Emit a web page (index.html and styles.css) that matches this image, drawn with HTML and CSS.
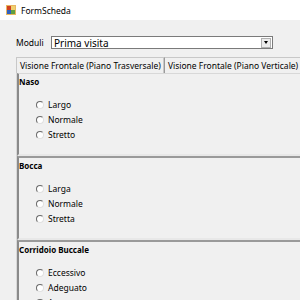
FILE: index.html
```html
<!DOCTYPE html>
<html lang="it">
<head>
<meta charset="UTF-8">
<title>FormScheda</title>
<link rel="stylesheet" href="styles.css">
</head>
<body>

<div class="titlebar">
    <svg class="app-icon" width="10" height="10" viewBox="0 0 10 10">
        <rect x="0" y="0" width="10" height="10" fill="#e8b860"/>
        <rect x="1" y="1" width="4" height="4" fill="#d04020"/>
        <rect x="5" y="1" width="4" height="4" fill="#f0d070"/>
        <rect x="1" y="5" width="4" height="4" fill="#3060c0"/>
        <rect x="5" y="5" width="4" height="4" fill="#60a040"/>
    </svg>
    <span class="title">FormScheda</span>
</div>

<div class="form">
    <div class="field-row">
        <label class="field-label">Moduli</label>
        <div class="combo">
            <span class="combo-text">Prima visita</span>
            <span class="combo-btn"><span class="arrow"></span></span>
        </div>
    </div>

    <div class="tabs">
        <div class="tab active">Visione Frontale (Piano Trasversale)</div>
        <div class="tab">Visione Frontale (Piano Verticale)</div>
    </div>

    <div class="tab-page">
        <div class="group">
            <div class="group-title">Naso</div>
            <div class="radios">
                <div class="radio"><span class="dot"></span>Largo</div>
                <div class="radio"><span class="dot"></span>Normale</div>
                <div class="radio"><span class="dot"></span>Stretto</div>
            </div>
        </div>
        <div class="group">
            <div class="group-title">Bocca</div>
            <div class="radios">
                <div class="radio"><span class="dot"></span>Larga</div>
                <div class="radio"><span class="dot"></span>Normale</div>
                <div class="radio"><span class="dot"></span>Stretta</div>
            </div>
        </div>
        <div class="group">
            <div class="group-title">Corridoio Buccale</div>
            <div class="radios">
                <div class="radio"><span class="dot"></span>Eccessivo</div>
                <div class="radio"><span class="dot"></span>Adeguato</div>
                <div class="radio"><span class="dot"></span>Assente</div>
            </div>
        </div>
    </div>
</div>

</body>
</html>
```

FILE: styles.css
```css
/* Window */
body {
    margin: 0;
    background-color: #f0f0f0;
    font-family: "Noto Sans", "DejaVu Sans", sans-serif;
    font-size: 8.5px;
    color: #000;
    overflow: hidden;
    height: 300px;
}

.titlebar {
    height: 20px;
    background-color: #fff;
    display: flex;
    align-items: center;
    padding-left: 6px;
}

.app-icon {
    margin-right: 5px;
}

.title {
    font-size: 8.5px;
}

.form {
    padding-left: 16px;
}

/* Combo row */
.field-row {
    display: flex;
    align-items: center;
    margin-top: 16px;
}

.field-label {
    width: 35px;
    font-size: 8.5px;
}

.combo {
    width: 220px;
    height: 11px;
    border: 1px solid #7a7a7a;
    background-color: #fff;
    display: flex;
    align-items: center;
    justify-content: space-between;
}

.combo-text {
    font-size: 10px;
    padding-left: 2px;
}

.combo-btn {
    width: 10px;
    height: 10px;
    margin-right: 1px;
    border: 1px solid #b0b0b0;
    background-color: #ececec;
    box-sizing: border-box;
    display: flex;
    align-items: center;
    justify-content: center;
}

.arrow {
    width: 0;
    height: 0;
    border-left: 2px solid transparent;
    border-right: 2px solid transparent;
    border-top: 3px solid #000;
}

/* Tabs */
.tabs {
    display: flex;
    margin-top: 8px;
    height: 16px;
}

.tab {
    box-sizing: border-box;
    height: 16px;
    padding: 0 2px 0 3px;
    line-height: 15px;
    border: 1px solid #c8c8c8;
    border-bottom: none;
    background-color: #f0f0f0;
    white-space: nowrap;
}

.tab + .tab {
    border-left: 1px solid #9a9a9a;
}

.tab-page {
    border-left: 1px solid #d8d8d8;
}

/* Sections */
.group {
    height: 80px;
    border-top: 2px solid #9a9a9a;
    border-left: 2px solid #8a8a8a;
    border-bottom: 2px solid #e8e8e8;
}

.group:first-child {
    border-top: 1px solid #d8d8d8;
}

.group-title {
    font-weight: bold;
    font-size: 8px;
    height: 12px;
    line-height: 12px;
    padding-top: 2px;
}

.radios {
    padding-left: 17px;
    margin-top: 9px;
}

.radio {
    display: flex;
    align-items: center;
    height: 15px;
}

.dot {
    width: 6px;
    height: 6px;
    border-radius: 50%;
    border: 1px solid #6a6a6a;
    border-color: #6a6a6a #e0e0e0 #e0e0e0 #6a6a6a;
    background-color: #fff;
    margin-right: 4px;
}
```
